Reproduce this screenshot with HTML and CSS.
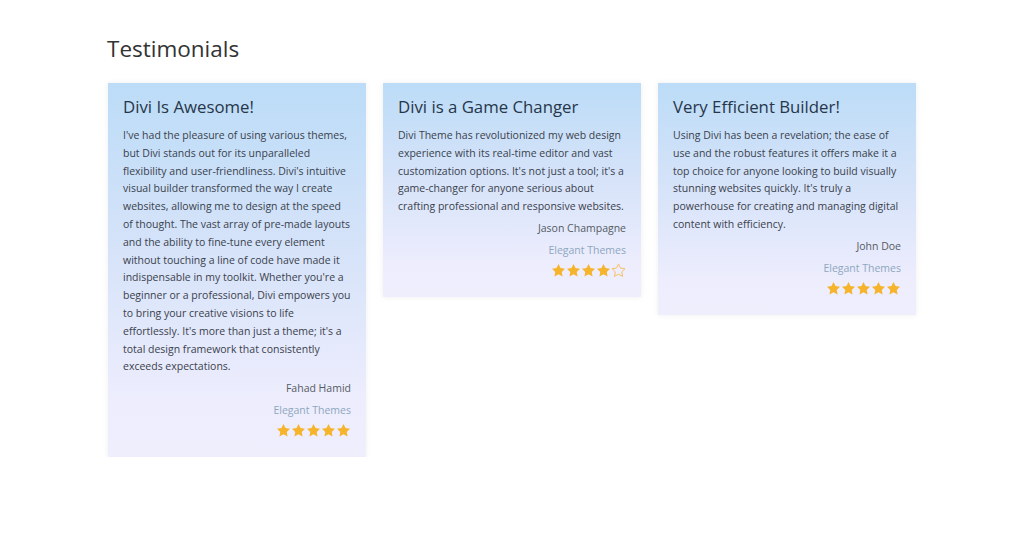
FILE: index.html
```html
<!DOCTYPE html>
<html>
<head>
<meta charset="utf-8">
<link rel="stylesheet" href="styles.css">
</head>
<body>
<main class="page">
  <h1 class="page-title">Testimonials</h1>
  <div class="cards">
    <article class="card">
      <h2 class="card-title">Divi Is Awesome!</h2>
      <p class="card-text">I've had the pleasure of using various themes, but Divi stands out for its unparalleled flexibility and user-friendliness. Divi's intuitive visual builder transformed the way I create websites, allowing me to design at the speed of thought. The vast array of pre-made layouts and the ability to fine-tune every element without touching a line of code have made it indispensable in my toolkit. Whether you're a beginner or a professional, Divi empowers you to bring your creative visions to life effortlessly. It's more than just a theme; it's a total design framework that consistently exceeds expectations.</p>
      <div class="author">Fahad Hamid</div>
      <div class="company">Elegant Themes</div>
      <div class="stars">
        <svg class="star" viewBox="0 0 24 24"><path d="M12 1.5l3.2 6.6 7.2 1-5.2 5.1 1.3 7.2L12 18l-6.5 3.4 1.3-7.2-5.2-5.1 7.2-1z"/></svg>
        <svg class="star" viewBox="0 0 24 24"><path d="M12 1.5l3.2 6.6 7.2 1-5.2 5.1 1.3 7.2L12 18l-6.5 3.4 1.3-7.2-5.2-5.1 7.2-1z"/></svg>
        <svg class="star" viewBox="0 0 24 24"><path d="M12 1.5l3.2 6.6 7.2 1-5.2 5.1 1.3 7.2L12 18l-6.5 3.4 1.3-7.2-5.2-5.1 7.2-1z"/></svg>
        <svg class="star" viewBox="0 0 24 24"><path d="M12 1.5l3.2 6.6 7.2 1-5.2 5.1 1.3 7.2L12 18l-6.5 3.4 1.3-7.2-5.2-5.1 7.2-1z"/></svg>
        <svg class="star" viewBox="0 0 24 24"><path d="M12 1.5l3.2 6.6 7.2 1-5.2 5.1 1.3 7.2L12 18l-6.5 3.4 1.3-7.2-5.2-5.1 7.2-1z"/></svg>
      </div>
    </article>
    <article class="card">
      <h2 class="card-title">Divi is a Game Changer</h2>
      <p class="card-text">Divi Theme has revolutionized my web design experience with its real-time editor and vast customization options. It's not just a tool; it's a game-changer for anyone serious about crafting professional and responsive websites.</p>
      <div class="author">Jason Champagne</div>
      <div class="company">Elegant Themes</div>
      <div class="stars">
        <svg class="star" viewBox="0 0 24 24"><path d="M12 1.5l3.2 6.6 7.2 1-5.2 5.1 1.3 7.2L12 18l-6.5 3.4 1.3-7.2-5.2-5.1 7.2-1z"/></svg>
        <svg class="star" viewBox="0 0 24 24"><path d="M12 1.5l3.2 6.6 7.2 1-5.2 5.1 1.3 7.2L12 18l-6.5 3.4 1.3-7.2-5.2-5.1 7.2-1z"/></svg>
        <svg class="star" viewBox="0 0 24 24"><path d="M12 1.5l3.2 6.6 7.2 1-5.2 5.1 1.3 7.2L12 18l-6.5 3.4 1.3-7.2-5.2-5.1 7.2-1z"/></svg>
        <svg class="star" viewBox="0 0 24 24"><path d="M12 1.5l3.2 6.6 7.2 1-5.2 5.1 1.3 7.2L12 18l-6.5 3.4 1.3-7.2-5.2-5.1 7.2-1z"/></svg>
        <svg class="star star-empty" viewBox="0 0 24 24"><path d="M12 1.5l3.2 6.6 7.2 1-5.2 5.1 1.3 7.2L12 18l-6.5 3.4 1.3-7.2-5.2-5.1 7.2-1z"/></svg>
      </div>
    </article>
    <article class="card">
      <h2 class="card-title">Very Efficient Builder!</h2>
      <p class="card-text">Using Divi has been a revelation; the ease of use and the robust features it offers make it a top choice for anyone looking to build visually stunning websites quickly. It's truly a powerhouse for creating and managing digital content with efficiency.</p>
      <div class="author">John Doe</div>
      <div class="company">Elegant Themes</div>
      <div class="stars">
        <svg class="star" viewBox="0 0 24 24"><path d="M12 1.5l3.2 6.6 7.2 1-5.2 5.1 1.3 7.2L12 18l-6.5 3.4 1.3-7.2-5.2-5.1 7.2-1z"/></svg>
        <svg class="star" viewBox="0 0 24 24"><path d="M12 1.5l3.2 6.6 7.2 1-5.2 5.1 1.3 7.2L12 18l-6.5 3.4 1.3-7.2-5.2-5.1 7.2-1z"/></svg>
        <svg class="star" viewBox="0 0 24 24"><path d="M12 1.5l3.2 6.6 7.2 1-5.2 5.1 1.3 7.2L12 18l-6.5 3.4 1.3-7.2-5.2-5.1 7.2-1z"/></svg>
        <svg class="star" viewBox="0 0 24 24"><path d="M12 1.5l3.2 6.6 7.2 1-5.2 5.1 1.3 7.2L12 18l-6.5 3.4 1.3-7.2-5.2-5.1 7.2-1z"/></svg>
        <svg class="star" viewBox="0 0 24 24"><path d="M12 1.5l3.2 6.6 7.2 1-5.2 5.1 1.3 7.2L12 18l-6.5 3.4 1.3-7.2-5.2-5.1 7.2-1z"/></svg>
      </div>
    </article>
  </div>
</main>
</body>
</html>
```

FILE: styles.css
```css
html, body {
  margin: 0;
  padding: 0;
  background: #ffffff;
}

body {
  font-family: "Open Sans", "Liberation Sans", sans-serif;
  color: #444;
}

.page {
  padding: 34px 0 0 108px;
}

.page-title {
  margin: 0 0 19px -1px;
  font-size: 22.5px;
  line-height: 30px;
  font-weight: 400;
  color: #333;
}

.cards {
  display: flex;
  align-items: flex-start;
  gap: 17px;
}

.card {
  width: 258px;
  box-sizing: border-box;
  padding: 12px 15px 19px;
  background: linear-gradient(180deg, #bcdcf7 0%, #d6e3f9 45%, #ededfd 85%, #efeefd 100%);
  box-shadow: 0 0 6px rgba(0, 0, 0, 0.07);
}

.card-title {
  margin: 0 0 8px;
  font-size: 16.8px;
  line-height: 24px;
  font-weight: 400;
  color: #26364a;
}

.card-text {
  margin: 0 0 3px;
  font-size: 10.5px;
  line-height: 17.8px;
  color: #3a414c;
}

.author {
  text-align: right;
  font-size: 10.5px;
  line-height: 18px;
  color: #555b63;
  margin-bottom: 4px;
}

.company {
  text-align: right;
  font-size: 10.5px;
  line-height: 18px;
  color: #8ea7c0;
  margin-bottom: 4px;
}

.stars {
  display: flex;
  justify-content: flex-end;
  gap: 0;
}

.star {
  width: 15px;
  height: 15px;
  fill: #f6b42c;
}

.star-empty {
  fill: none;
  stroke: #f6c063;
  stroke-width: 1.6;
}
```
